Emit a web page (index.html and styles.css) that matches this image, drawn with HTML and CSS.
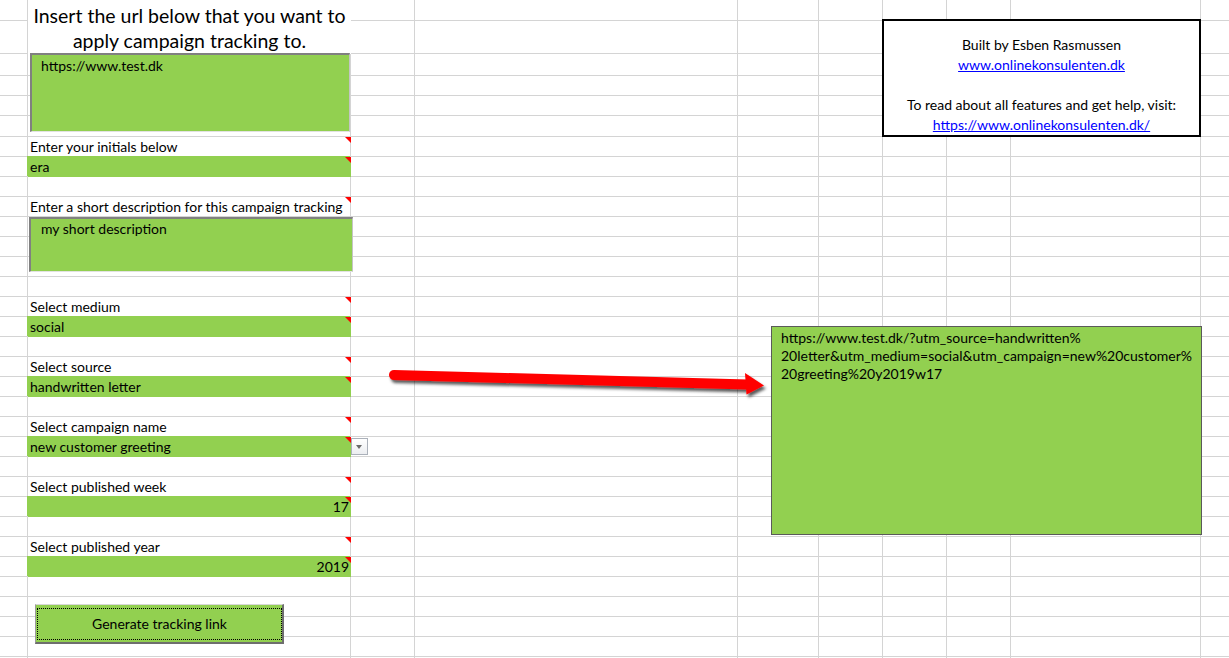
FILE: index.html
```html
<!DOCTYPE html>
<html lang="en">
<head>
<meta charset="utf-8">
<title>Campaign tracking</title>
<link rel="stylesheet" href="styles.css">
</head>
<body>
<div class="sheet">
  <div class="cell title">Insert the url below that you want to<br>apply campaign tracking to.</div>

  <div class="cell note r7">Enter your initials below</div>
  <div class="cell fill note r8">era</div>

  <div class="cell note r10">Enter a short description for this campaign tracking</div>

  <div class="cell note r15">Select medium</div>
  <div class="cell fill note r16">social</div>

  <div class="cell note r18">Select source</div>
  <div class="cell fill note r19">handwritten letter</div>

  <div class="cell note r21">Select campaign name</div>
  <div class="cell fill note r22">new customer greeting</div>

  <div class="cell note r24">Select published week</div>
  <div class="cell fill note num r25">17</div>

  <div class="cell note r27">Select published year</div>
  <div class="cell fill note num r28">2019</div>

  <div class="textbox tb-url">https://www.test.dk</div>
  <div class="textbox tb-desc">my short description</div>

  <div class="dropdown"></div>

  <div class="btn"><div class="btn-face">Generate tracking link</div></div>

  <svg class="arrow" width="400" height="45" viewBox="0 0 400 45" xmlns="http://www.w3.org/2000/svg">
    <defs>
      <filter id="shadow" x="-10%" y="-60%" width="120%" height="220%">
        <feDropShadow dx="2" dy="3" stdDeviation="1.6" flood-color="#000" flood-opacity="0.65"/>
      </filter>
    </defs>
    <g filter="url(#shadow)" fill="#ff0000">
      <line x1="14" y1="15" x2="368" y2="24.5" stroke="#ff0000" stroke-width="10" stroke-linecap="round"/>
      <polygon points="365,13 384,25.5 366.5,34.5"/>
    </g>
  </svg>

  <div class="result">https://www.test.dk/?utm_source=handwritten%<br>20letter&amp;utm_medium=social&amp;utm_campaign=new%20customer%<br>20greeting%20y2019w17</div>

  <div class="info">
    <div>Built by Esben Rasmussen</div>
    <div><a href="#">www.onlinekonsulenten.dk</a></div>
    <div class="blank"></div>
    <div>To read about all features and get help, visit:</div>
    <div><a href="#">https://www.onlinekonsulenten.dk/</a></div>
  </div>
</div>
</body>
</html>
```

FILE: styles.css
```css
* { box-sizing: border-box; }

html, body {
  margin: 0;
  padding: 0;
}

body {
  font-family: Lato, "Open Sans", "Liberation Sans", sans-serif;
  font-size: 14px;
  color: #000;
  background: #fff;
}

.sheet {
  position: relative;
  width: 1229px;
  height: 658px;
  overflow: hidden;
  display: grid;
  grid-template-columns: 28px 323px 64px 323px 81px 64px 64px 64px 190px 1fr;
  grid-template-rows: 21px 33px 22px 20px 20px 21px repeat(26, 20px) 1fr;
  background-color: #fff;
  background-image:
    linear-gradient(#d4d4d4, #d4d4d4),
    linear-gradient(#d4d4d4, #d4d4d4),
    linear-gradient(#d4d4d4, #d4d4d4),
    linear-gradient(#d4d4d4, #d4d4d4),
    linear-gradient(#d4d4d4, #d4d4d4),
    linear-gradient(#d4d4d4, #d4d4d4),
    linear-gradient(#d4d4d4, #d4d4d4),
    linear-gradient(#d4d4d4, #d4d4d4),
    linear-gradient(#d4d4d4, #d4d4d4),
    linear-gradient(#d4d4d4, #d4d4d4),
    linear-gradient(#d4d4d4, #d4d4d4),
    linear-gradient(#d4d4d4, #d4d4d4),
    linear-gradient(#d4d4d4, #d4d4d4),
    linear-gradient(#d4d4d4, #d4d4d4),
    repeating-linear-gradient(to bottom, #d4d4d4 0 1px, transparent 1px 20px);
  background-size:
    1px 100%, 1px 100%, 1px 100%, 1px 100%, 1px 100%, 1px 100%, 1px 100%, 1px 100%, 1px 100%,
    100% 1px, 100% 1px, 100% 1px, 100% 1px, 100% 1px,
    100% 522px;
  background-position:
    27px 0, 350px 0, 414px 0, 737px 0, 818px 0, 882px 0, 946px 0, 1010px 0, 1200px 0,
    0 20px, 0 53px, 0 75px, 0 95px, 0 115px,
    0 136px;
  background-repeat: no-repeat;
}

/* worksheet cells in column B */
.cell {
  grid-column: 2;
  position: relative;
  display: flex;
  align-items: flex-end;
  padding: 0 2px 1px 2px;
  line-height: 19px;
  white-space: nowrap;
}

.title {
  grid-row: 1 / 3;
  background: #fff;
  justify-content: center;
  text-align: center;
  font-size: 19.5px;
  line-height: 25px;
  padding: 0 0 1px 0;
}

.fill {
  background: #92d050;
  box-shadow: -1px -1px 0 #92d050;
}

.num { justify-content: flex-end; }

.note::after {
  content: "";
  position: absolute;
  top: 0;
  right: 0;
  width: 0;
  height: 0;
  border-top: 6px solid #ff0000;
  border-left: 6px solid transparent;
}

.r7 { grid-row: 7; }
.r8 { grid-row: 8; }
.r10 { grid-row: 10; }
.r15 { grid-row: 15; }
.r16 { grid-row: 16; }
.r18 { grid-row: 18; }
.r19 { grid-row: 19; }
.r21 { grid-row: 21; }
.r22 { grid-row: 22; }
.r24 { grid-row: 24; }
.r25 { grid-row: 25; }
.r27 { grid-row: 27; }
.r28 { grid-row: 28; }

/* floating shapes and controls over the sheet */
.textbox {
  position: absolute;
  background: #92d050;
  border-top: 2px solid #808080;
  border-left: 2px solid #808080;
  border-right: 1px solid #c4c4c4;
  border-bottom: 1px solid #e2e2e2;
  line-height: 18px;
  white-space: nowrap;
}

.tb-url {
  left: 30px;
  top: 53px;
  width: 320px;
  height: 79px;
  padding: 2px 9px;
}

.tb-desc {
  left: 29px;
  top: 217px;
  width: 324px;
  height: 55px;
  padding: 1px 10px;
}

.dropdown {
  position: absolute;
  left: 351px;
  top: 438px;
  width: 17px;
  height: 17px;
  border: 1px solid #abb1ba;
  background: linear-gradient(#ffffff, #eceef1);
}

.dropdown::after {
  content: "";
  position: absolute;
  left: 4px;
  top: 6px;
  width: 0;
  height: 0;
  border-top: 4px solid #6a6a6a;
  border-left: 3.5px solid transparent;
  border-right: 3.5px solid transparent;
}

.btn {
  position: absolute;
  left: 35px;
  top: 604px;
  width: 249px;
  height: 40px;
  display: flex;
  background: #92d050;
  border-top: 1px solid #d8d8d8;
  border-left: 1px solid #9a9a9a;
  border-right: 2px solid #6e6e6e;
  border-bottom: 2px solid #6e6e6e;
  padding: 3px 0 2px 1px;
}

.btn-face {
  flex: 1;
  display: flex;
  align-items: center;
  justify-content: center;
  border: 1px dotted #000;
  padding-bottom: 1px;
}

.arrow {
  position: absolute;
  left: 380px;
  top: 360px;
}

.result {
  position: absolute;
  left: 771px;
  top: 326px;
  width: 431px;
  height: 209px;
  background: #92d050;
  border: 1px solid #5a5a5a;
  padding: 2px 9px;
  line-height: 18px;
  white-space: nowrap;
}

.info {
  position: absolute;
  left: 882px;
  top: 19px;
  width: 319px;
  height: 118px;
  background: #fff;
  border: 2px solid #000;
  padding-top: 14px;
  text-align: center;
  line-height: 20px;
}

.info .blank { height: 20px; }

.info a {
  color: #0000ff;
  text-decoration: underline;
}
```
